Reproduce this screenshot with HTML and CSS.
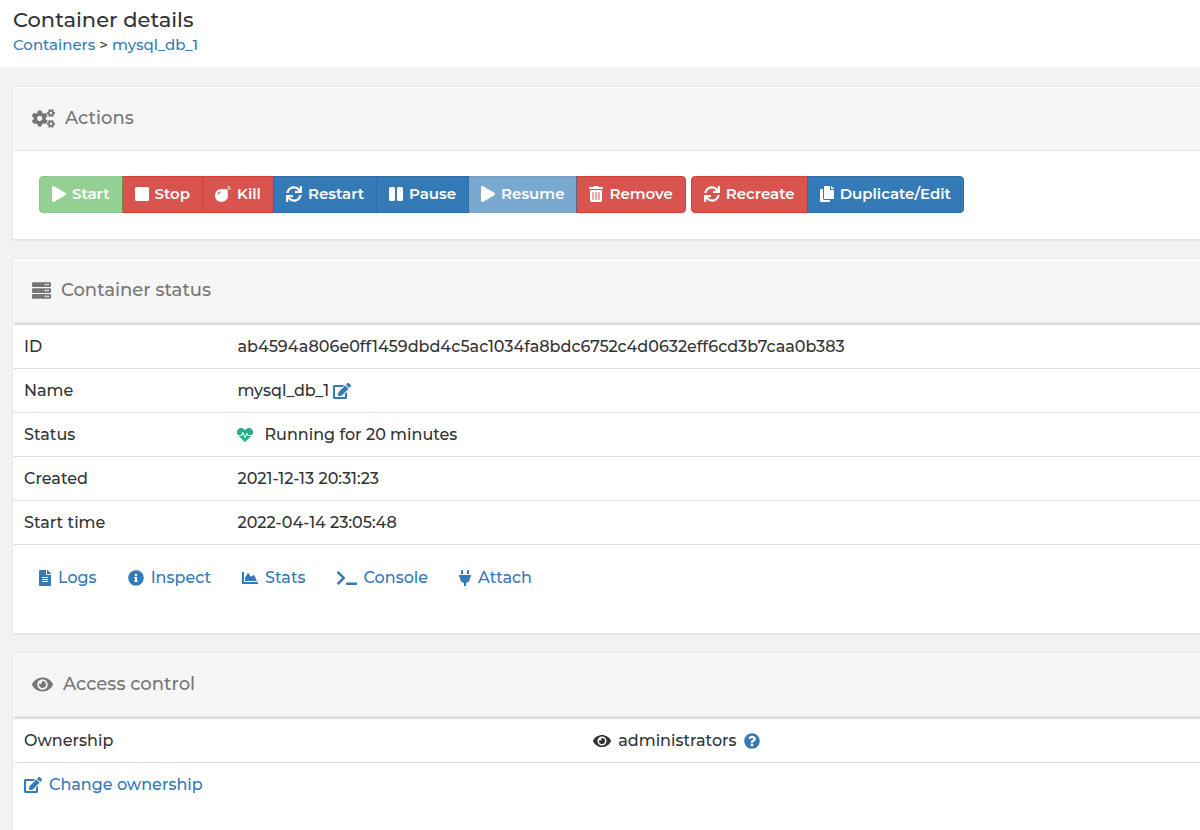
FILE: index.html
```html
<!DOCTYPE html>
<html lang="en">

<head>
  <meta charset="UTF-8">
  <meta name="viewport" content="width=device-width, initial-scale=1.0">
  <title>Container details</title>
  <link rel="stylesheet" href="styles.css">
</head>

<body>
  <!-- Icon shapes -->
  <svg class="sprite" aria-hidden="true">
    <symbol id="play" viewBox="0 0 448 512"><path d="M424.4 214.7L72.4 6.6C43.8-10.3 0 6.1 0 47.9V464c0 37.5 40.7 60.1 72.4 41.3l352-208c31.4-18.5 31.5-64.1 0-82.6z"/></symbol>
    <symbol id="stop" viewBox="0 0 448 512"><path d="M400 32H48C21.5 32 0 53.5 0 80v352c0 26.5 21.5 48 48 48h352c26.5 0 48-21.5 48-48V80c0-26.5-21.5-48-48-48z"/></symbol>
    <symbol id="pause" viewBox="0 0 448 512"><path d="M144 479H48c-26.5 0-48-21.5-48-48V79c0-26.5 21.5-48 48-48h96c26.5 0 48 21.5 48 48v352c0 26.5-21.5 48-48 48zm304-48V79c0-26.5-21.5-48-48-48h-96c-26.5 0-48 21.5-48 48v352c0 26.5 21.5 48 48 48h96c26.5 0 48-21.5 48-48z"/></symbol>
    <symbol id="bomb" viewBox="0 0 512 512"><path d="M440.5 88.5l-52 52L415 167c9.4 9.4 9.4 24.6 0 33.9l-17.4 17.4c11.8 26.1 18.4 55.1 18.4 85.6 0 114.9-93.1 208-208 208S0 418.9 0 304 93.1 96 208 96c30.5 0 59.5 6.6 85.6 18.4L311 97c9.4-9.4 24.6-9.4 33.9 0l26.5 26.5 52-52 17.1 17zM500 60h-24c-6.6 0-12 5.4-12 12s5.4 12 12 12h24c6.6 0 12-5.4 12-12s-5.4-12-12-12zM440 0c-6.6 0-12 5.4-12 12v24c0 6.6 5.4 12 12 12s12-5.4 12-12V12c0-6.6-5.4-12-12-12zm33.9 55l17-17c4.7-4.7 4.7-12.3 0-17-4.7-4.7-12.3-4.7-17 0l-17 17c-4.7 4.7-4.7 12.3 0 17 4.8 4.7 12.4 4.7 17 0zm-67.8 0c4.7 4.7 12.3 4.7 17 0 4.7-4.7 4.7-12.3 0-17l-17-17c-4.7-4.7-12.3-4.7-17 0-4.7 4.7-4.7 12.3 0 17l17 17zm67.8 34c-4.7-4.7-12.3-4.7-17 0-4.7 4.7-4.7 12.3 0 17l17 17c4.7 4.7 12.3 4.7 17 0 4.7-4.7 4.7-12.3 0-17l-17-17zM112 272c0-35.3 28.7-64 64-64 8.8 0 16-7.2 16-16s-7.2-16-16-16c-52.9 0-96 43.1-96 96 0 8.8 7.2 16 16 16s16-7.2 16-16z"/></symbol>
    <symbol id="sync" viewBox="0 0 512 512"><path d="M440.65 12.57l4 82.77A247.16 247.16 0 0 0 255.83 8C134.73 8 33.91 94.92 12.29 209.82A12 12 0 0 0 24.09 224h49.05a12 12 0 0 0 11.67-9.26 175.91 175.91 0 0 1 317-56.94l-101.46-4.86a12 12 0 0 0-12.57 12v47.41a12 12 0 0 0 12 12H500a12 12 0 0 0 12-12V12a12 12 0 0 0-12-12h-47.37a12 12 0 0 0-11.98 12.57zM255.83 432a175.61 175.61 0 0 1-146-77.8l101.8 4.87a12 12 0 0 0 12.57-12v-47.4a12 12 0 0 0-12-12H12a12 12 0 0 0-12 12V500a12 12 0 0 0 12 12h47.35a12 12 0 0 0 12-12.6l-4.15-82.57A247.17 247.17 0 0 0 255.83 504c121.11 0 221.93-86.92 243.55-201.82a12 12 0 0 0-11.8-14.18h-49.05a12 12 0 0 0-11.67 9.26A175.86 175.86 0 0 1 255.83 432z"/></symbol>
    <symbol id="trash" viewBox="0 0 448 512"><path d="M32 464a48 48 0 0 0 48 48h288a48 48 0 0 0 48-48V128H32zm272-256a16 16 0 0 1 32 0v224a16 16 0 0 1-32 0zm-96 0a16 16 0 0 1 32 0v224a16 16 0 0 1-32 0zm-96 0a16 16 0 0 1 32 0v224a16 16 0 0 1-32 0zM432 32H312l-9.4-18.7A24 24 0 0 0 281.1 0H166.8a23.72 23.72 0 0 0-21.4 13.3L136 32H16A16 16 0 0 0 0 48v32a16 16 0 0 0 16 16h416a16 16 0 0 0 16-16V48a16 16 0 0 0-16-16z"/></symbol>
    <symbol id="copy" viewBox="0 0 448 512"><path d="M320 448v40c0 13.255-10.745 24-24 24H24c-13.255 0-24-10.745-24-24V120c0-13.255 10.745-24 24-24h72v296c0 30.879 25.121 56 56 56h168zm0-344V0H152c-13.255 0-24 10.745-24 24v368c0 13.255 10.745 24 24 24h272c13.255 0 24-10.745 24-24V128H344c-13.2 0-24-10.8-24-24zm120.971-31.029L375.029 7.029A24 24 0 0 0 358.059 0H352v96h96v-6.059a24 24 0 0 0-7.029-16.97z"/></symbol>
    <symbol id="cogs" viewBox="0 0 640 512"><path d="M512.1 191l-8.2 14.3c-3 5.3-9.4 7.5-15.1 5.4-11.8-4.4-22.6-10.7-32.1-18.6-4.6-3.8-5.8-10.5-2.8-15.7l8.2-14.3c-6.9-8-12.3-17.3-15.9-27.4h-16.5c-6 0-11.2-4.3-12.2-10.3-2-12-2.1-24.6 0-37.1 1-6 6.2-10.4 12.2-10.4h16.5c3.6-10.1 9-19.4 15.9-27.4l-8.2-14.3c-3-5.2-1.9-11.9 2.8-15.7 9.5-7.9 20.4-14.2 32.1-18.6 5.7-2.1 12.1.1 15.1 5.4l8.2 14.3c10.5-1.9 21.2-1.9 31.7 0L552 6.3c3-5.3 9.4-7.5 15.1-5.4 11.8 4.4 22.6 10.7 32.1 18.6 4.6 3.8 5.8 10.5 2.8 15.7l-8.2 14.3c6.9 8 12.3 17.3 15.9 27.4h16.5c6 0 11.2 4.3 12.2 10.3 2 12 2.1 24.6 0 37.1-1 6-6.2 10.4-12.2 10.4h-16.5c-3.6 10.1-9 19.4-15.9 27.4l8.2 14.3c3 5.2 1.9 11.9-2.8 15.7-9.5 7.9-20.4 14.2-32.1 18.6-5.7 2.1-12.1-.1-15.1-5.4l-8.2-14.3c-10.4 1.9-21.2 1.9-31.7 0zm-10.5-58.8c38.5 29.6 82.4-14.3 52.8-52.8-38.5-29.7-82.4 14.3-52.8 52.8zM386.3 286.1l33.7 16.8c10.1 5.8 14.5 18.1 10.5 29.1-8.9 24.2-26.4 46.4-42.6 65.8-7.4 8.9-20.2 11.1-30.3 5.3l-29.1-16.8c-16 13.7-34.6 24.6-54.9 31.7v33.6c0 11.6-8.3 21.6-19.7 23.6-24.6 4.2-50.4 4.4-75.9 0-11.5-2-20-11.9-20-23.6V418c-20.3-7.2-38.9-18-54.9-31.7L74 403c-10 5.8-22.9 3.6-30.3-5.3-16.2-19.4-33.3-41.6-42.2-65.7-4-10.9.4-23.2 10.5-29.1l33.3-16.8c-3.9-20.9-3.9-42.4 0-63.4L12 205.8c-10.1-5.8-14.6-18.1-10.5-29 8.9-24.2 26-46.4 42.2-65.8 7.4-8.9 20.2-11.1 30.3-5.3l29.1 16.8c16-13.7 34.6-24.6 54.9-31.7V57.1c0-11.5 8.2-21.5 19.6-23.5 24.6-4.2 50.5-4.4 76-.1 11.5 2 20 11.9 20 23.6v33.6c20.3 7.2 38.9 18 54.9 31.7l29.1-16.8c10-5.8 22.9-3.6 30.3 5.3 16.2 19.4 33.2 41.6 42.1 65.8 4 10.9.1 23.2-10 29.1l-33.7 16.8c3.9 21 3.9 42.5 0 63.5zm-117.6 21.1c59.2-77-28.7-164.9-105.7-105.7-59.2 77 28.7 164.9 105.7 105.7zM512.1 490l-8.2 14.3c-3 5.3-9.4 7.5-15.1 5.4-11.8-4.4-22.6-10.7-32.1-18.6-4.6-3.8-5.8-10.5-2.8-15.7l8.2-14.3c-6.9-8-12.3-17.3-15.9-27.4h-16.5c-6 0-11.2-4.3-12.2-10.3-2-12-2.1-24.6 0-37.1 1-6 6.2-10.4 12.2-10.4h16.5c3.6-10.1 9-19.4 15.9-27.4l-8.2-14.3c-3-5.2-1.9-11.9 2.8-15.7 9.5-7.9 20.4-14.2 32.1-18.6 5.7-2.1 12.1.1 15.1 5.4l8.2 14.3c10.5-1.9 21.2-1.9 31.7 0l8.2-14.2c3-5.3 9.4-7.5 15.1-5.4 11.8 4.4 22.6 10.7 32.1 18.6 4.6 3.8 5.8 10.5 2.8 15.7l-8.2 14.3c6.9 8 12.3 17.3 15.9 27.4h16.5c6 0 11.2 4.3 12.2 10.3 2 12 2.1 24.6 0 37.1-1 6-6.2 10.4-12.2 10.4h-16.5c-3.6 10.1-9 19.4-15.9 27.4l8.2 14.3c3 5.2 1.9 11.9-2.8 15.7-9.5 7.9-20.4 14.2-32.1 18.6-5.7 2.1-12.1-.1-15.1-5.4l-8.2-14.3c-10.4 1.9-21.2 1.9-31.7 0zm-10.5-58.8c38.5 29.6 82.4-14.3 52.8-52.8-38.5-29.7-82.4 14.3-52.8 52.8z"/></symbol>
    <symbol id="server" viewBox="0 0 512 512"><path d="M480 160H32c-17.673 0-32-14.327-32-32V64c0-17.673 14.327-32 32-32h448c17.673 0 32 14.327 32 32v64c0 17.673-14.327 32-32 32zm-48-88c-13.255 0-24 10.745-24 24s10.745 24 24 24 24-10.745 24-24-10.745-24-24-24zm-64 0c-13.255 0-24 10.745-24 24s10.745 24 24 24 24-10.745 24-24-10.745-24-24-24zm112 248H32c-17.673 0-32-14.327-32-32v-64c0-17.673 14.327-32 32-32h448c17.673 0 32 14.327 32 32v64c0 17.673-14.327 32-32 32zm-48-88c-13.255 0-24 10.745-24 24s10.745 24 24 24 24-10.745 24-24-10.745-24-24-24zm-64 0c-13.255 0-24 10.745-24 24s10.745 24 24 24 24-10.745 24-24-10.745-24-24-24zm112 248H32c-17.673 0-32-14.327-32-32v-64c0-17.673 14.327-32 32-32h448c17.673 0 32 14.327 32 32v64c0 17.673-14.327 32-32 32zm-48-88c-13.255 0-24 10.745-24 24s10.745 24 24 24 24-10.745 24-24-10.745-24-24-24zm-64 0c-13.255 0-24 10.745-24 24s10.745 24 24 24 24-10.745 24-24-10.745-24-24-24z"/></symbol>
    <symbol id="eye" viewBox="0 0 576 512"><path d="M572.52 241.4C518.29 135.59 410.93 64 288 64S57.68 135.64 3.48 241.41a32.35 32.35 0 0 0 0 29.19C57.71 376.41 165.07 448 288 448s230.32-71.64 284.52-177.41a32.35 32.35 0 0 0 0-29.19zM288 400a144 144 0 1 1 144-144 143.93 143.93 0 0 1-144 144zm0-240a95.31 95.31 0 0 0-25.31 3.79 47.85 47.85 0 0 1-66.9 66.9A95.78 95.78 0 1 0 288 160z"/></symbol>
    <symbol id="edit" viewBox="0 0 576 512"><path d="M402.6 83.2l90.2 90.2c3.8 3.8 3.8 10 0 13.8L274.4 405.6l-92.8 10.3c-12.4 1.4-22.9-9.1-21.5-21.5l10.3-92.8L388.8 83.2c3.8-3.8 10-3.8 13.8 0zm162-22.9l-48.8-48.8c-15.2-15.2-39.9-15.2-55.2 0l-35.4 35.4c-3.8 3.8-3.8 10 0 13.8l90.2 90.2c3.8 3.8 10 3.8 13.8 0l35.4-35.4c15.2-15.3 15.2-40 0-55.2zM384 346.2V448H64V128h229.8c3.2 0 6.2-1.3 8.5-3.5l40-40c7.6-7.6 2.2-20.5-8.5-20.5H48C21.5 64 0 85.5 0 112v352c0 26.5 21.5 48 48 48h352c26.5 0 48-21.5 48-48V306.2c0-10.7-12.9-16-20.5-8.5l-40 40c-2.2 2.3-3.5 5.3-3.5 8.5z"/></symbol>
    <symbol id="heartbeat" viewBox="0 0 512 512"><path d="M320.2 243.8l-49.7 99.4c-6 12.1-23.4 11.7-28.9-.6l-56.9-126.3-30 71.7H60.6l182.5 186.5c7.1 7.3 18.6 7.3 25.7 0L451.4 288H342.3l-22.1-44.2zM473.7 73.9l-2.4-2.5c-51.5-52.6-135.8-52.6-187.4 0L256 100l-27.9-28.5c-51.5-52.7-135.9-52.7-187.4 0l-2.4 2.4C-10.4 123.7-12.5 203 31 256h102.4l35.9-86.2c5.4-12.9 23.6-13.2 29.4-.4l58.2 129.3 49-97.9c5.9-11.8 22.7-11.8 28.6 0l27.6 55.2H481c43.5-53 41.4-132.3-7.3-182.1z"/></symbol>
    <symbol id="file" viewBox="0 0 384 512"><path d="M224 136V0H24C10.7 0 0 10.7 0 24v464c0 13.3 10.7 24 24 24h336c13.3 0 24-10.7 24-24V160H248c-13.2 0-24-10.8-24-24zm64 236c0 6.6-5.4 12-12 12H108c-6.6 0-12-5.4-12-12v-8c0-6.6 5.4-12 12-12h168c6.6 0 12 5.4 12 12v8zm0-64c0 6.6-5.4 12-12 12H108c-6.6 0-12-5.4-12-12v-8c0-6.6 5.4-12 12-12h168c6.6 0 12 5.4 12 12v8zm0-72v8c0 6.6-5.4 12-12 12H108c-6.6 0-12-5.4-12-12v-8c0-6.6 5.4-12 12-12h168c6.6 0 12 5.4 12 12zm96-114.1v6.1H256V0h6.1c6.4 0 12.5 2.5 17 7l97.9 98c4.5 4.5 7 10.6 7 16.9z"/></symbol>
    <symbol id="info" viewBox="0 0 512 512"><path d="M256 8C119.043 8 8 119.083 8 256c0 136.997 111.043 248 248 248s248-111.003 248-248C504 119.083 392.957 8 256 8zm0 110c23.196 0 42 18.804 42 42s-18.804 42-42 42-42-18.804-42-42 18.804-42 42-42zm56 254c0 6.627-5.373 12-12 12h-88c-6.627 0-12-5.373-12-12v-24c0-6.627 5.373-12 12-12h12v-64h-12c-6.627 0-12-5.373-12-12v-24c0-6.627 5.373-12 12-12h64c6.627 0 12 5.373 12 12v100h12c6.627 0 12 5.373 12 12v24z"/></symbol>
    <symbol id="chart" viewBox="0 0 512 512"><path d="M500 384c6.6 0 12 5.4 12 12v40c0 6.6-5.4 12-12 12H12c-6.6 0-12-5.4-12-12V76c0-6.6 5.4-12 12-12h40c6.6 0 12 5.4 12 12v308h436zM372.7 159.5L288 216l-85.3-113.7c-5.1-6.8-15.5-6.3-19.9 1L96 248v104h384l-89.9-187.8c-3.2-6.5-11.4-8.7-17.4-4.7z"/></symbol>
    <symbol id="terminal" viewBox="0 0 640 512"><path d="M257.981 272.971L63.638 467.314c-9.373 9.373-24.569 9.373-33.941 0L7.029 444.647c-9.357-9.357-9.375-24.522-.04-33.901L161.011 256 6.99 101.255c-9.335-9.379-9.317-24.544.04-33.901l22.667-22.667c9.373-9.373 24.569-9.373 33.941 0L257.981 239.03c9.373 9.372 9.373 24.568 0 33.941zM640 456v-32c0-13.255-10.745-24-24-24H312c-13.255 0-24 10.745-24 24v32c0 13.255 10.745 24 24 24h304c13.255 0 24-10.745 24-24z"/></symbol>
    <symbol id="plug" viewBox="0 0 384 512"><path d="M320 32a32 32 0 0 0-64 0v96h64zm48 128H16A16 16 0 0 0 0 176v32a16 16 0 0 0 16 16h16v32A160.07 160.07 0 0 0 160 412.8V512h64V412.8A160.07 160.07 0 0 0 352 256V224h16a16 16 0 0 0 16-16V176A16 16 0 0 0 368 160zM128 32a32 32 0 0 0-64 0v96h64z"/></symbol>
    <symbol id="question" viewBox="0 0 512 512"><path d="M504 256c0 136.997-111.043 248-248 248S8 392.997 8 256C8 119.083 119.043 8 256 8s248 111.083 248 248zM262.655 90c-54.497 0-89.255 22.957-116.549 63.758-3.536 5.286-2.353 12.415 2.715 16.258l34.699 26.31c5.205 3.947 12.621 3.008 16.665-2.122 17.864-22.658 30.113-35.797 57.303-35.797 20.429 0 45.698 13.148 45.698 32.958 0 14.976-12.363 22.667-32.534 33.976C247.128 238.528 216 254.941 216 296v4c0 6.627 5.373 12 12 12h56c6.627 0 12-5.373 12-12v-1.333c0-28.462 83.186-29.647 83.186-106.667 0-58.002-60.165-102-116.531-102zM256 338c-25.365 0-46 20.635-46 46 0 25.364 20.635 46 46 46s46-20.636 46-46c0-25.365-20.635-46-46-46z"/></symbol>
  </svg>

  <header class="page-header">
    <h1>Container details</h1>
    <nav class="breadcrumb"><a href="#">Containers</a> &gt; <a href="#">mysql_db_1</a></nav>
  </header>

  <main>
    <section class="widget">
      <h2 class="widget-header"><svg class="icon icon-wide"><use href="#cogs"/></svg>Actions</h2>
      <div class="widget-body">
        <div class="btn-group">
          <button type="button" class="btn btn-success" disabled><svg class="icon icon-narrow"><use href="#play"/></svg>Start</button>
          <button type="button" class="btn btn-danger"><svg class="icon icon-narrow"><use href="#stop"/></svg>Stop</button>
          <button type="button" class="btn btn-danger"><svg class="icon"><use href="#bomb"/></svg>Kill</button>
          <button type="button" class="btn btn-primary"><svg class="icon"><use href="#sync"/></svg>Restart</button>
          <button type="button" class="btn btn-primary"><svg class="icon icon-narrow"><use href="#pause"/></svg>Pause</button>
          <button type="button" class="btn btn-primary" disabled><svg class="icon icon-narrow"><use href="#play"/></svg>Resume</button>
          <button type="button" class="btn btn-danger"><svg class="icon icon-narrow"><use href="#trash"/></svg>Remove</button>
        </div>
        <div class="btn-group">
          <button type="button" class="btn btn-danger"><svg class="icon"><use href="#sync"/></svg>Recreate</button>
          <button type="button" class="btn btn-primary"><svg class="icon icon-narrow"><use href="#copy"/></svg>Duplicate/Edit</button>
        </div>
      </div>
    </section>

    <section class="widget">
      <h2 class="widget-header"><svg class="icon"><use href="#server"/></svg>Container status</h2>
      <table class="table status-table">
        <tbody>
          <tr>
            <th scope="row">ID</th>
            <td>ab4594a806e0ff1459dbd4c5ac1034fa8bdc6752c4d0632eff6cd3b7caa0b383</td>
          </tr>
          <tr>
            <th scope="row">Name</th>
            <td><div class="cell cell-tight">mysql_db_1<a href="#" aria-label="Edit name"><svg class="icon icon-edit"><use href="#edit"/></svg></a></div></td>
          </tr>
          <tr>
            <th scope="row">Status</th>
            <td><div class="cell cell-status"><svg class="icon icon-healthy"><use href="#heartbeat"/></svg>Running for 20 minutes</div></td>
          </tr>
          <tr>
            <th scope="row">Created</th>
            <td>2021-12-13 20:31:23</td>
          </tr>
          <tr>
            <th scope="row">Start time</th>
            <td>2022-04-14 23:05:48</td>
          </tr>
          <tr>
            <td colspan="2">
              <nav class="quick-links">
                <a href="#"><svg class="icon icon-slim"><use href="#file"/></svg>Logs</a>
                <a href="#"><svg class="icon"><use href="#info"/></svg>Inspect</a>
                <a href="#"><svg class="icon"><use href="#chart"/></svg>Stats</a>
                <a href="#"><svg class="icon icon-wide"><use href="#terminal"/></svg>Console</a>
                <a href="#"><svg class="icon icon-slim"><use href="#plug"/></svg>Attach</a>
              </nav>
            </td>
          </tr>
        </tbody>
      </table>
    </section>

    <section class="widget">
      <h2 class="widget-header"><svg class="icon icon-eye"><use href="#eye"/></svg>Access control</h2>
      <table class="table access-table">
        <tbody>
          <tr>
            <th scope="row">Ownership</th>
            <td><div class="cell"><svg class="icon icon-eye"><use href="#eye"/></svg>administrators<a href="#" aria-label="Help"><svg class="icon"><use href="#question"/></svg></a></div></td>
          </tr>
          <tr>
            <td colspan="2"><a class="cell" href="#"><svg class="icon icon-edit"><use href="#edit"/></svg>Change ownership</a></td>
          </tr>
        </tbody>
      </table>
    </section>
  </main>
</body>

</html>
```
FILE: styles.css
```css
* {
  box-sizing: border-box;
}

body {
  margin: 0;
  background-color: #f2f2f2;
  color: #333;
  font-family: Montserrat, Inter, sans-serif;
  font-size: 16px;
  font-weight: 500;
  line-height: 23px;
}

a {
  color: #337ab7;
  text-decoration: none;
}

a:hover {
  color: #23527c;
}

.sprite {
  display: none;
}

.icon {
  flex: none;
  width: 16px;
  height: 16px;
  fill: currentColor;
}

.icon-slim {
  width: 12px;
}

.icon-narrow {
  width: 14px;
}

.icon-edit,
.icon-eye {
  width: 18px;
}

.icon-wide {
  width: 20px;
}

.icon-healthy {
  color: #23ae89;
}

.page-header {
  padding: 8px 13px 11px;
  background-color: #fff;
}

.page-header h1 {
  margin: 0 0 2px;
  font-size: 21px;
  font-weight: 500;
  line-height: 23px;
}

.breadcrumb {
  font-size: 15px;
}

main {
  padding: 19px 0 0 12px;
}

/* Widgets */
.widget {
  margin-bottom: 17px;
  padding: 1px 0 0 1px;
  background-color: #fff;
  border: 1px solid #e7e7e7;
  border-bottom-width: 2px;
  border-right: 0;
  border-radius: 2px 0 0 2px;
}

.widget-header {
  display: flex;
  align-items: center;
  gap: 10px;
  height: 63px;
  margin: 0;
  padding: 0 18px 1px;
  background-color: #f6f6f6;
  border-bottom: 1px solid #e7e7e7;
  color: #767676;
  font-size: 18px;
  font-weight: 500;
}

.widget-header .icon {
  width: 19px;
  height: 19px;
}

.widget-header .icon-eye {
  width: 21px;
}

.widget-header .icon-wide {
  width: 23px;
}

.widget-body {
  display: flex;
  flex-wrap: wrap;
  gap: 5px;
  padding: 25px 25px 26px;
}

/* Buttons */
.btn-group {
  display: flex;
}

.btn {
  display: flex;
  align-items: center;
  gap: 6px;
  height: 37px;
  padding: 0 12px 2px;
  border: 1px solid;
  color: #fff;
  font-family: inherit;
  font-size: 15px;
  font-weight: 600;
  cursor: pointer;
}

.btn + .btn {
  margin-left: -1px;
}

.btn:first-child {
  border-radius: 4px 0 0 4px;
}

.btn:last-child {
  border-radius: 0 4px 4px 0;
}

.btn-success {
  background-color: #5cb85c;
  border-color: #4cae4c;
}

.btn-danger {
  background-color: #d9534f;
  border-color: #d43f3a;
}

.btn-primary {
  background-color: #337ab7;
  border-color: #2e6da4;
}

.btn:disabled {
  opacity: 0.65;
  cursor: not-allowed;
}

/* Tables */
.table {
  width: 100%;
  border-collapse: separate;
  border-spacing: 0;
  border-top: 1px solid #ddd;
  table-layout: fixed;
}

.table th,
.table td {
  padding: 10px;
  border-top: 1px solid #ddd;
  font-weight: 500;
  text-align: left;
}

.status-table th {
  width: 18%;
}

.access-table {
  padding-bottom: 40px;
}

.access-table th {
  width: 48%;
}

.cell {
  display: flex;
  align-items: center;
  gap: 7px;
}

.cell-tight {
  gap: 4px;
}

.cell-status {
  gap: 11px;
}

.cell a {
  display: flex;
}

.quick-links {
  display: flex;
  gap: 31px;
  padding: 11px 15px 34px;
}

.quick-links a {
  display: flex;
  align-items: center;
  gap: 7px;
}
```
